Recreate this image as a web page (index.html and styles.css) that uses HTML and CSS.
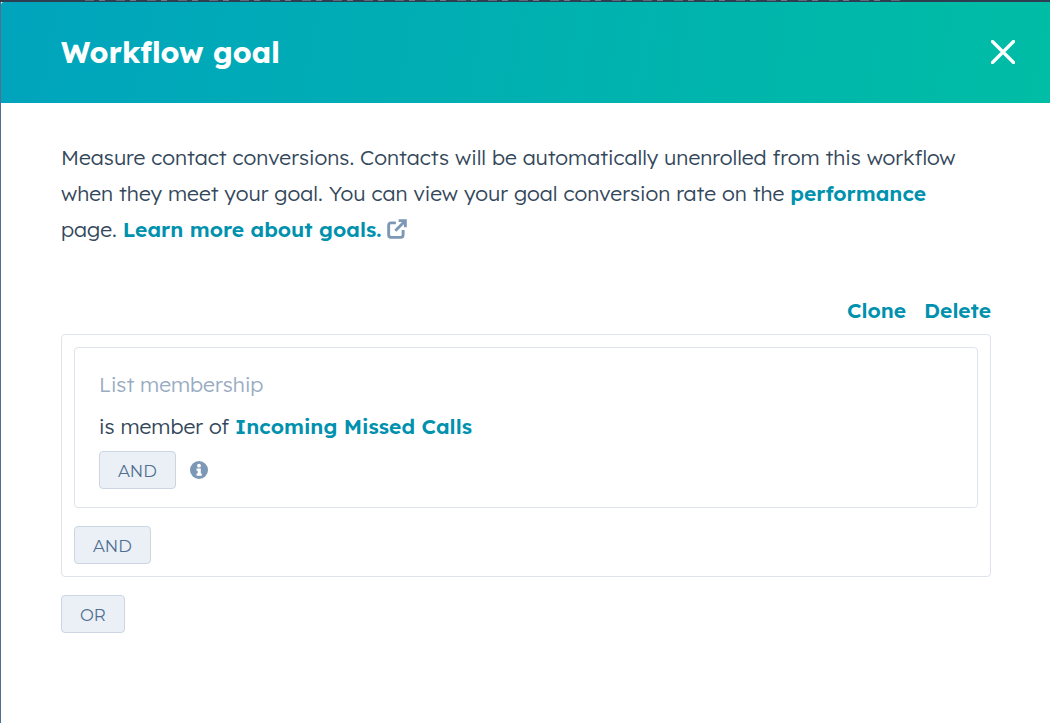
FILE: index.html
```html
<!DOCTYPE html>
<html lang="en">
<head>
<meta charset="utf-8">
<title>Workflow goal</title>
<link rel="stylesheet" href="styles.css">
</head>
<body>
<div class="backdrop-strip"></div>
<section class="modal">
  <header class="modal-header">
    <h1 class="modal-title">Workflow goal</h1>
    <button class="close-btn" aria-label="Close">
      <svg viewBox="0 0 24 24" width="24" height="24"><path d="M1.500 1.500 22.500 22.500M22.500 1.500 1.500 22.500" stroke="#fff" stroke-width="3.200" stroke-linecap="round" fill="none"/></svg>
    </button>
  </header>
  <div class="modal-body">
    <p class="intro">Measure contact conversions. Contacts will be automatically unenrolled from this workflow when they meet your goal. You can view your goal conversion rate on the <a class="link" href="#">performance</a> page. <a class="link" href="#">Learn more about goals.</a> <svg class="ext-icon" viewBox="0 0 18 18" width="20" height="20"><path d="M8 3.500H3.500a2 2 0 0 0-2 2V14.500a2 2 0 0 0 2 2h9a2 2 0 0 0 2-2V10" stroke="#7c98b6" stroke-width="2.600" fill="none"/><path d="M7.500 10.500 16 2M10.500 1.500H16.500V7.500" stroke="#7c98b6" stroke-width="2.600" fill="none"/></svg></p>
    <div class="actions">
      <a class="link" href="#">Clone</a>
      <a class="link" href="#">Delete</a>
    </div>
    <div class="group">
      <div class="filter">
        <div class="filter-label">List membership</div>
        <div class="filter-text">is member of <a class="link" href="#">Incoming Missed Calls</a></div>
        <div class="filter-row">
          <button class="pill">AND</button>
          <svg class="info-icon" viewBox="0 0 18 18" width="18" height="18"><circle cx="9" cy="9" r="9" fill="#7c98b6"/><circle cx="9" cy="4.700" r="1.900" fill="#fff"/><path d="M6.500 7.500H10.800V12.500H11.800V14.800H6.500V12.500H7.700V9.800H6.500Z" fill="#fff"/></svg>
        </div>
      </div>
      <button class="pill">AND</button>
    </div>
    <button class="pill or-pill">OR</button>
  </div>
</section>
</body>
</html>
```
FILE: styles.css
```css
* { box-sizing: border-box; }
html, body { margin: 0; height: 100%; }
body {
  width: 1050px;
  height: 723px;
  overflow: hidden;
  background: #516f90;
  font-family: "Lexend Deca", "Noto Sans", "Liberation Sans", sans-serif;
  font-weight: 300;
  color: #33475b;
  display: flex;
  flex-direction: column;
}
.backdrop-strip {
  height: 2px;
  flex: none;
  background-color: #2d3e50;
  background-image: repeating-linear-gradient(90deg, #5b6b7c 0 9px, #2d3e50 9px 14px, #6b7a8a 14px 20px, #2d3e50 20px 31px);
  background-size: 815px 1px;
  background-position: 85px 0;
  background-repeat: no-repeat;
}
.modal { flex: 1; margin-left: 1px; background: #fff; display: flex; flex-direction: column; }
.modal-header {
  height: 101px;
  flex: none;
  background: linear-gradient(100deg, #00a4bd 0%, #00bda5 100%);
  display: flex;
  align-items: center;
  justify-content: space-between;
  padding: 0 35px 2px 60px;
  border-top-left-radius: 3px;
}
.modal-title { margin: 0; color: #fff; font-size: 29.500px; font-weight: 700; line-height: 36px; }
.close-btn { background: none; border: 0; padding: 0; display: flex; }
.modal-body { padding: 36px 59px 0 60px; display: flex; flex-direction: column; align-items: flex-start; }
.intro { margin: 0; font-size: 21px; line-height: 36px; max-width: 900px; }
.link { color: #0091ae; font-weight: 600; text-decoration: none; }
.ext-icon { vertical-align: -2px; }
.actions { align-self: stretch; display: flex; justify-content: flex-end; gap: 18px; margin-top: 45px; font-size: 21px; line-height: 36px; }
.group { align-self: stretch; margin-top: 6px; border: 1px solid #dfe3eb; border-radius: 4px; padding: 12px; height: 243px; }
.filter { border: 1px solid #dfe3eb; border-radius: 4px; height: 161px; padding: 18px 24px 0; margin-bottom: 18px; }
.filter-label { color: #99acc2; font-size: 21px; line-height: 36px; }
.filter-text { font-size: 21px; line-height: 36px; margin-top: 6px; }
.filter-row { display: flex; align-items: center; gap: 14px; margin-top: 7px; }
.pill { background: #eaf0f6; border: 1px solid #cbd6e2; border-radius: 4px; color: #506e91; font: 400 16.500px/1 "Montserrat", "Noto Sans", sans-serif; height: 38px; padding: 2px 18px 0; }
.or-pill { margin-top: 18px; }
```
